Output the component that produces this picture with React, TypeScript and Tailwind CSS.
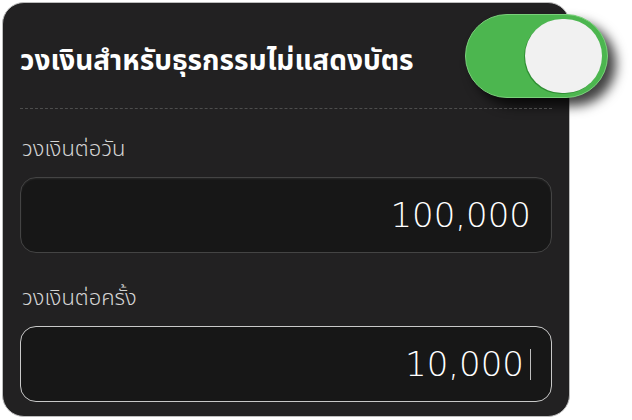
const font = { fontFamily: '"Noto Sans Thai", "Noto Sans", "Liberation Sans", sans-serif' };
const digits = { fontFamily: '"DejaVu Sans", "Noto Sans", sans-serif' };

function Toggle() {
  return (
    <div className="mt-[11px] mr-[-56px] flex h-[84px] w-[143px] shrink-0 items-center justify-end rounded-full border border-[#79d07a] bg-[#4cb64f] pr-[5px] shadow-[8px_8px_12px_rgba(0,0,0,0.75)]">
      <div className="h-[74px] w-[77px] rounded-full bg-[#f1f1f1] shadow-[-1px_1px_0_#2f8f33]" />
    </div>
  );
}

function Field({ label, value, focused }: { label: string; value: string; focused?: boolean }) {
  return (
    <div className="flex flex-col">
      <div className="pl-[2px] text-[22px] font-light leading-[24px] text-[#d4d4d4]">{label}</div>
      <div
        className={
          focused
            ? 'mt-[15px] flex h-[76px] items-center justify-end rounded-[16px] border border-[#c9c9c9] bg-[#171717] pr-[20px]'
            : 'mt-[15px] flex h-[76px] items-center justify-end rounded-[16px] border border-[#444] bg-[#171717] pr-[20px] shadow-[inset_0_1px_2px_rgba(255,255,255,0.08)]'
        }
      >
        <span className="text-[34px] font-extralight leading-none text-white" style={digits}>
          {value}
        </span>
        {focused && <span className="ml-[6px] h-[31px] w-[1px] bg-[#bdbdbd]" />}
      </div>
    </div>
  );
}

export default function App() {
  return (
    <div className="h-[420px] w-[632px] overflow-hidden bg-white p-[2px]" style={font}>
      <div className="flex h-[415px] w-[568px] flex-col rounded-[22px] border border-[#bdbdbd] bg-[#222122] px-[17px]">
        <div className="flex items-start justify-between">
          <h1 className="mt-[42px] text-[28px] font-bold leading-[34px] text-white">
            วงเงินสำหรับธุรกรรมไม่แสดงบัตร
          </h1>
          <Toggle />
        </div>
        <div className="mt-[10px] border-t border-dashed border-[#4d4d4d]" />
        <div className="mt-[29px] flex flex-col gap-[34px]">
          <Field label="วงเงินต่อวัน" value="100,000" />
          <Field label="วงเงินต่อครั้ง" value="10,000" focused />
        </div>
      </div>
    </div>
  );
}
